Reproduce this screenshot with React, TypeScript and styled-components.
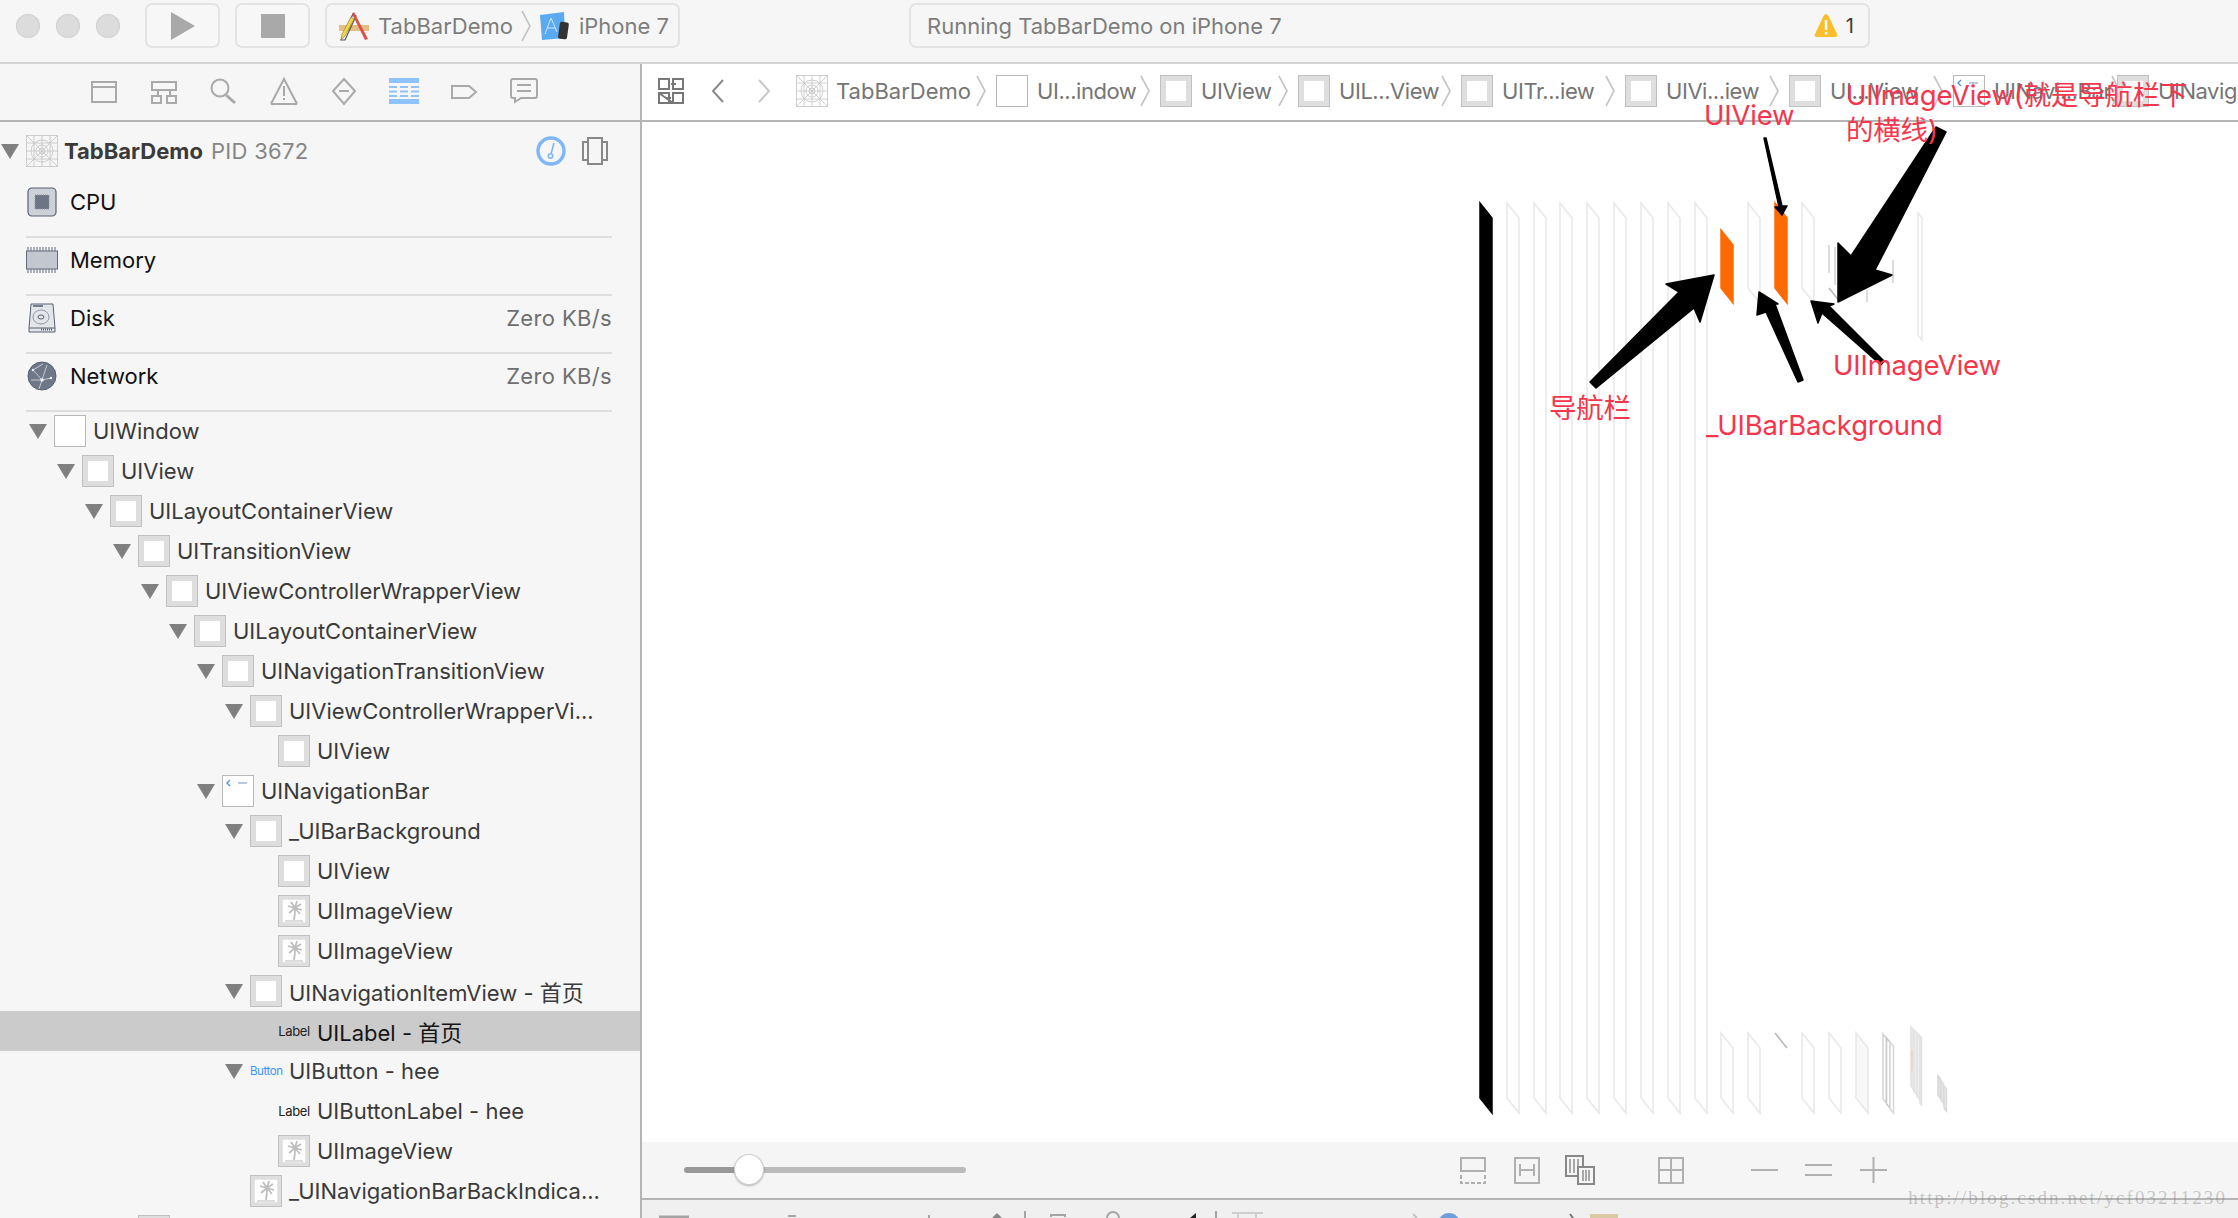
import React from "react";
import styled, { createGlobalStyle } from "styled-components";

const UI_FONT = `"Inter", "Noto Sans CJK SC", sans-serif`;

const GlobalStyle = createGlobalStyle`
  html, body {
    margin: 0;
    padding: 0;
    background: #fff;
    font-family: ${UI_FONT};
  }
`;

const Window = styled.div`
  position: relative;
  display: flex;
  flex-direction: column;
  width: 2238px;
  height: 1218px;
  overflow: hidden;
`;

const Toolbar = styled.div`
  display: flex;
  align-items: flex-start;
  flex: none;
  height: 62px;
  padding-top: 3px;
  box-sizing: border-box;
  background: #f6f6f6;
`;

const ToolbarRule = styled.div`
  flex: none;
  height: 2px;
  background: #d4d4d4;
`;

const Lights = styled.div`
  display: flex;
  gap: 16px;
  padding: 11px 0 0 16px;
  width: 145px;
  box-sizing: border-box;
`;

const Light = styled.span`
  width: 24px;
  height: 24px;
  border-radius: 50%;
  background: #dcdcdc;
  box-shadow: inset 0 0 0 1px #d2d2d2;
`;

const ToolButton = styled.div`
  display: flex;
  align-items: center;
  justify-content: center;
  width: 75px;
  height: 45px;
  margin-right: 15px;
  box-sizing: border-box;
  border: 2px solid #e3e3e3;
  border-radius: 7px;
  background: #f7f7f7;
`;

const SchemeBox = styled.div`
  display: flex;
  align-items: center;
  width: 355px;
  height: 45px;
  padding-left: 11px;
  box-sizing: border-box;
  border: 2px solid #e3e3e3;
  border-radius: 7px;
  font-size: 22px;
  color: #7d7d7d;
`;

const SchemeLabel = styled.span`
  margin-left: 8px;
`;

const StatusBox = styled.div`
  display: flex;
  align-items: center;
  justify-content: space-between;
  width: 961px;
  height: 45px;
  margin-left: 229px;
  padding: 0 14px 0 16px;
  box-sizing: border-box;
  border: 2px solid #e3e3e3;
  border-radius: 7px;
  font-size: 22px;
  color: #7d7d7d;
`;

const WarningCount = styled.div`
  display: flex;
  align-items: center;
  gap: 8px;
  color: #3c3c3c;
  font-size: 20px;
`;

const Body = styled.div`
  display: flex;
  flex: 1;
  min-height: 0;
`;

const Sidebar = styled.div`
  flex: none;
  width: 642px;
  box-sizing: border-box;
  background: #f6f6f6;
  border-right: 2px solid #b5b5b5;
  overflow: hidden;
`;

const NavTabs = styled.div`
  display: flex;
  align-items: center;
  gap: 26px;
  height: 58px;
  padding: 0 0 2px 87px;
  box-sizing: border-box;
  border-bottom: 2px solid #b5b5b5;
`;

const ProcessRow = styled.div`
  display: flex;
  align-items: center;
  height: 58px;
  padding: 0 32px 0 1px;
  font-size: 22px;
`;

const ProcessTriangle = styled.span`
  width: 0;
  height: 0;
  margin-right: 7px;
  border-left: 9px solid transparent;
  border-right: 9px solid transparent;
  border-top: 15px solid #808080;
`;

const ProcessName = styled.span`
  margin-left: 6px;
  font-weight: 700;
  color: #3a3a3a;
`;

const ProcessPid = styled.span`
  margin-left: 8px;
  letter-spacing: 0.3px;
  color: #868686;
  flex: 1;
`;

const ProcessTools = styled.div`
  display: flex;
  align-items: center;
  gap: 16px;
`;

const MetricList = styled.div`
  padding: 0 28px 0 26px;
`;

const MetricRow = styled.div`
  display: flex;
  align-items: center;
  height: 56px;
  margin-bottom: 2px;
  padding-bottom: 13px;
  box-sizing: border-box;
  box-shadow: 0 2px 0 #dedede;
  font-size: 22px;
  color: #111;
`;

const MetricIcon = styled.span`
  display: flex;
  justify-content: center;
  width: 32px;
  margin-right: 12px;
`;

const MetricName = styled.span`
  flex: 1;
`;

const MetricValue = styled.span`
  color: #6f6f6f;
  letter-spacing: 0.35px;
`;

const Tree = styled.div`
  margin-top: -1px;
`;

const TreeRow = styled.div<{ $depth: number; $selected?: boolean }>`
  display: flex;
  align-items: center;
  gap: 7px;
  height: 40px;
  padding-left: ${({ $depth }) => 29 + $depth * 28}px;
  background: ${({ $selected }) => ($selected ? "#cbcbcb" : "transparent")};
  color: ${({ $selected }) => ($selected ? "#151515" : "#3a3a3a")};
  font-size: 22px;
  white-space: nowrap;
`;

const Disclosure = styled.span<{ $open: boolean }>`
  flex: none;
  width: 0;
  height: 0;
  border-left: 9px solid transparent;
  border-right: 9px solid transparent;
  border-top: 15px solid ${({ $open }) => ($open ? "#808080" : "transparent")};
`;

const ViewThumb = styled.span<{ $plain?: boolean }>`
  display: flex;
  flex: none;
  align-items: center;
  justify-content: center;
  width: 32px;
  height: 32px;
  box-sizing: border-box;
  border: 1px solid ${({ $plain }) => ($plain ? "#b9b9b9" : "#c0c0c0")};
  background: ${({ $plain }) => ($plain ? "#fff" : "#dedede")};
`;

const ViewInner = styled.span`
  width: 20px;
  height: 20px;
  background: #fff;
`;

const TagThumb = styled.span<{ $blue?: boolean }>`
  flex: none;
  width: 32px;
  text-align: center;
  font-size: ${({ $blue }) => ($blue ? "11.5px" : "13px")};
  letter-spacing: -0.4px;
  color: ${({ $blue }) => ($blue ? "#3b93ff" : "#222")};
`;

const Pane = styled.div`
  position: relative;
  display: flex;
  flex: 1;
  flex-direction: column;
  min-width: 0;
`;

const JumpBar = styled.div`
  display: flex;
  align-items: center;
  flex: none;
  height: 58px;
  padding: 0 0 2px 16px;
  box-sizing: border-box;
  border-bottom: 2px solid #b5b5b5;
  background: #fff;
  overflow: hidden;
  white-space: nowrap;
  font-size: 22px;
  color: #757575;
`;

const JumpGlyph = styled.svg`
  flex: none;
`;

const JumpArrows = styled.div`
  display: flex;
  flex: none;
  align-items: center;
  gap: 32px;
  margin: 0 25px 0 27px;
`;

const Crumb = styled.div<{ $width: number }>`
  display: flex;
  flex: none;
  align-items: center;
  width: ${({ $width }) => $width}px;
  padding-right: 10px;
  box-sizing: border-box;
  > svg {
    flex: none;
  }
`;

const CrumbLabel = styled.span<{ $tight: boolean }>`
  margin-left: ${({ $tight }) => ($tight ? "9px" : "8px")};
  letter-spacing: ${({ $tight }) => ($tight ? "-0.45px" : "0")};
`;

const CrumbChevron = styled.svg`
  flex: none;
  margin-left: auto;
`;

const SchemeChevron = styled.svg`
  flex: none;
  margin: 0 8px;
`;

const Canvas = styled.div`
  flex: 1;
  min-height: 0;
  background: #fff;
  svg {
    display: block;
  }
`;

const ZoomBar = styled.div`
  display: flex;
  align-items: center;
  flex: none;
  height: 58px;
  box-sizing: border-box;
  padding-left: 42px;
  background: #f5f5f5;
  border-bottom: 2px solid #b5b5b5;
`;

const Slider = styled.div`
  position: relative;
  width: 282px;
  height: 6px;
  border-radius: 3px;
  background: linear-gradient(to right, #999 0 65px, #bbb 65px);
`;

const SliderKnob = styled.span`
  position: absolute;
  left: 50px;
  top: -13px;
  width: 30px;
  height: 31px;
  box-sizing: border-box;
  border-radius: 50%;
  background: #fff;
  border: 1px solid #cfcfcf;
  box-shadow: 0 1px 2px rgba(0, 0, 0, 0.25);
`;

const ZoomTools = styled.div`
  display: flex;
  align-items: center;
  margin-left: 494px;
  height: 100%;
`;

const ZoomTool = styled.svg<{ $gap: number }>`
  flex: none;
  margin-right: ${({ $gap }) => $gap}px;
`;

const DebugStrip = styled.div`
  flex: none;
  height: 18px;
  background: #f0f0f0;
  overflow: hidden;
  svg {
    display: block;
  }
`;

const Note = styled.div<{ $x: number; $y: number }>`
  position: absolute;
  left: ${({ $x }) => $x - 642}px;
  top: ${({ $y }) => $y - 64 - 20}px;
  font-size: 27.5px;
  line-height: 40px;
  letter-spacing: -0.2px;
  color: #f5364c;
  white-space: nowrap;
`;

const Watermark = styled.div`
  position: absolute;
  right: 11px;
  bottom: 8px;
  font-family: "Liberation Serif", serif;
  font-size: 19px;
  letter-spacing: 2.1px;
  line-height: 24px;
  color: rgba(130, 130, 130, 0.42);
  white-space: nowrap;
`;

const iconStroke = "#a9a9a9";

const NavIcon = ({ children, active }: { children: React.ReactNode; active?: boolean }) => (
  <svg width="34" height="30" viewBox="0 0 34 30" fill="none" stroke={active ? "#8fc1fb" : iconStroke} strokeWidth="2">
    {children}
  </svg>
);

const NavIcons = () => (
  <>
    <NavIcon>
      <path d="M5 6h24v20H5zM5 11h24" />
    </NavIcon>
    <NavIcon>
      <path d="M5 6h24v8H5zM11 14v6M23 14v6M5 20h9v7H5zM20 20h9v7h-9z" />
    </NavIcon>
    <NavIcon>
      <circle cx="13" cy="12" r="8.500" />
      <path d="M19 19l9 8" strokeWidth="3" />
    </NavIcon>
    <NavIcon>
      <path d="M17 3L29 26a1 1 0 0 1-1 2H6a1 1 0 0 1-1-2zM17 10v10M17 22v2" />
    </NavIcon>
    <NavIcon>
      <path d="M17 3l11 12-11 13L6 15zM12 15h10" />
    </NavIcon>
    <NavIcon active>
      <path d="M2 4.500h30" strokeWidth="5" />
      <path d="M2 11h8M13 11h8M24 11h8M2 15.500h8M13 15.500h8M24 15.500h8M2 20h8M13 20h8M24 20h8" />
      <path d="M2 25.500h30" strokeWidth="5" />
    </NavIcon>
    <NavIcon>
      <path d="M5 10h17l7 6-7 6H5z" />
    </NavIcon>
    <NavIcon>
      <path d="M6 3h22a2 2 0 0 1 2 2v15a2 2 0 0 1-2 2H14l-6 4v-4H6a2 2 0 0 1-2-2V5a2 2 0 0 1 2-2zM10 9h14M10 15h14" />
    </NavIcon>
  </>
);

const AppGlyph = () => (
  <svg width="32" height="32" viewBox="0 0 32 32" fill="none" stroke="#c4c4c4" strokeWidth="0.8">
    <rect x="0.500" y="0.500" width="31" height="31" />
    <path d="M0 0l32 32M32 0L0 32M16 0v32M0 16h32M8 0v32M24 0v32M0 8h32M0 24h32" />
    <circle cx="16" cy="16" r="11" />
    <circle cx="16" cy="16" r="6" />
    <circle cx="16" cy="16" r="3" />
  </svg>
);

const XcodeGlyph = () => (
  <svg width="32" height="32" viewBox="0 0 32 32">
    <rect x="1" y="15" width="30" height="6" fill="#e6bd80" />
    <path d="M3 30L15 4l3 2L7 30z" fill="none" stroke="#555" strokeWidth="1.2" />
    <path d="M3 30l1-6 9-17 3 2-9 17z" fill="#f1d64d" stroke="#8a7a2a" strokeWidth="0.6" />
    <path d="M16 2l14 27-3 1L14 4z" fill="#d9534a" />
  </svg>
);

const DeviceGlyph = () => (
  <svg width="32" height="32" viewBox="0 0 32 32">
    <path d="M1 5l24-3 1 26-23 2z" fill="#5aaaf0" />
    <path d="M12 8l-6 16M12 8l6 14M8 18h8" stroke="#cfe6fb" strokeWidth="1" fill="none" />
    <rect x="20" y="12" width="9" height="17" rx="2" transform="rotate(8 24 20)" fill="#333" />
  </svg>
);

const GaugeGlyph = () => (
  <svg width="30" height="30" viewBox="0 0 30 30" fill="none" stroke="#7fb6f5">
    <circle cx="15" cy="15" r="13" strokeWidth="3.400" />
    <path d="M18 7l-3 11" strokeWidth="1.600" />
    <circle cx="14.500" cy="20" r="2.200" strokeWidth="1.600" />
  </svg>
);

const SplitGlyph = () => (
  <svg width="26" height="28" viewBox="0 0 26 28" fill="none" stroke="#888" strokeWidth="2">
    <rect x="6" y="1" width="14" height="26" />
    <path d="M6 5H1v18h5M20 5h5v18h-5" />
  </svg>
);

const CpuGlyph = () => (
  <svg width="30" height="30" viewBox="0 0 30 30">
    <rect x="1" y="1" width="28" height="28" rx="4" fill="#cdd1d8" stroke="#596273" strokeWidth="1.200" />
    <rect x="8" y="8" width="14" height="14" fill="#6d7585" stroke="#8d94a3" strokeDasharray="1 1" />
  </svg>
);

const MemoryGlyph = () => (
  <svg width="32" height="26" viewBox="0 0 32 26">
    <path d="M2 0v4M5 0v4M8 0v4M11 0v4M14 0v4M17 0v4M20 0v4M23 0v4M26 0v4M29 0v4M2 22v4M5 22v4M8 22v4M11 22v4M14 22v4M17 22v4M20 22v4M23 22v4M26 22v4M29 22v4" stroke="#636b7a" strokeWidth="1" />
    <rect x="0.500" y="4" width="31" height="18" fill="#c3c7cf" stroke="#636b7a" />
  </svg>
);

const DiskGlyph = () => (
  <svg width="30" height="30" viewBox="0 0 30 30" fill="none">
    <path d="M4 1h22l2 24v4H2v-4z" fill="#e3e5e8" stroke="#596273" />
    <path d="M2 25h26" stroke="#596273" />
    <path d="M6 3h10" stroke="#596273" strokeWidth="1.600" />
    <ellipse cx="14" cy="14" rx="8" ry="7" stroke="#9298a3" />
    <ellipse cx="14" cy="14" rx="3" ry="2" stroke="#596273" />
    <path d="M14 26.500h12" stroke="#596273" strokeWidth="2" strokeDasharray="1 1" />
  </svg>
);

const NetworkGlyph = () => (
  <svg width="30" height="30" viewBox="0 0 30 30" fill="none">
    <circle cx="15" cy="15" r="14" fill="#6f7888" stroke="#596273" />
    <path d="M6 9l9 10 9-2M15 19l-3 9M15 19l5-15M6 9l10-6M4 19l11 0" stroke="#d9dde3" strokeWidth="0.800" />
    <circle cx="15" cy="19" r="1.800" fill="#eef0f3" />
    <circle cx="6" cy="9" r="1.200" fill="#eef0f3" />
    <circle cx="24" cy="17" r="1.200" fill="#eef0f3" />
  </svg>
);

const PalmThumb = () => (
  <ViewThumb>
    <svg width="24" height="24" viewBox="0 0 24 24">
      <rect width="24" height="24" fill="#fff" stroke="#cfcfcf" />
      <path d="M12 21c1-5 1-8 1-12M13 9L6 7M13 9l6-4M13 9l-4-6M13 9l2-7M13 9l7 2M13 9l-6 5M13 9l5 6" stroke="#bdbdbd" strokeWidth="1.800" fill="none" />
      <path d="M3 22h18" stroke="#dcdcdc" strokeWidth="2" />
    </svg>
  </ViewThumb>
);

const NavBarThumb = () => (
  <ViewThumb $plain>
    <svg width="28" height="28" viewBox="0 0 28 28">
      <path d="M6 3L3 6l3 3" stroke="#4a90e2" strokeWidth="1.300" fill="none" />
      <path d="M14 6h9" stroke="#b8c8de" strokeWidth="2" />
    </svg>
  </ViewThumb>
);

type Thumb = "view" | "window" | "image" | "bar" | "label" | "button";

type TreeNode = { depth: number; name?: string; thumb: Thumb; open?: boolean; selected?: boolean };

const NODES: TreeNode[] = [
  { depth: 0, name: "UIWindow", thumb: "window", open: true },
  { depth: 1, name: "UIView", thumb: "view", open: true },
  { depth: 2, name: "UILayoutContainerView", thumb: "view", open: true },
  { depth: 3, name: "UITransitionView", thumb: "view", open: true },
  { depth: 4, name: "UIViewControllerWrapperView", thumb: "view", open: true },
  { depth: 5, name: "UILayoutContainerView", thumb: "view", open: true },
  { depth: 6, name: "UINavigationTransitionView", thumb: "view", open: true },
  { depth: 7, name: "UIViewControllerWrapperVi...", thumb: "view", open: true },
  { depth: 8, name: "UIView", thumb: "view" },
  { depth: 6, name: "UINavigationBar", thumb: "bar", open: true },
  { depth: 7, name: "_UIBarBackground", thumb: "view", open: true },
  { depth: 8, name: "UIView", thumb: "view" },
  { depth: 8, name: "UIImageView", thumb: "image" },
  { depth: 8, name: "UIImageView", thumb: "image" },
  { depth: 7, name: "UINavigationItemView - 首页", thumb: "view", open: true },
  { depth: 8, name: "UILabel - 首页", thumb: "label", selected: true },
  { depth: 7, name: "UIButton - hee", thumb: "button", open: true },
  { depth: 8, name: "UIButtonLabel - hee", thumb: "label" },
  { depth: 8, name: "UIImageView", thumb: "image" },
  { depth: 7, name: "_UINavigationBarBackIndica...", thumb: "image" },
  { depth: 3, thumb: "view" },
];

const renderThumb = (thumb: Thumb) => {
  switch (thumb) {
    case "window":
      return <ViewThumb $plain />;
    case "image":
      return <PalmThumb />;
    case "bar":
      return <NavBarThumb />;
    case "label":
      return <TagThumb>Label</TagThumb>;
    case "button":
      return <TagThumb $blue>Button</TagThumb>;
    default:
      return (
        <ViewThumb>
          <ViewInner />
        </ViewThumb>
      );
  }
};

const chevronPath = <path d="M1 1l8 15-8 15" />;

const CRUMBS: { name: string; thumb: Thumb | "app"; width: number; last?: boolean }[] = [
  { name: "TabBarDemo", thumb: "app", width: 200 },
  { name: "UI...indow", thumb: "window", width: 164 },
  { name: "UIView", thumb: "view", width: 138 },
  { name: "UIL...View", thumb: "view", width: 163 },
  { name: "UITr...iew", thumb: "view", width: 164 },
  { name: "UIVi...iew", thumb: "view", width: 164 },
  { name: "UI...View", thumb: "view", width: 164 },
  { name: "UINavi...Bar", thumb: "bar", width: 164 },
  { name: "UINavigationBar", thumb: "view", width: 300, last: true },
];

type Frame = { x: number; top: number; bottom: number; w?: number; fill?: string; stroke?: string };

const TALL_X = [1507, 1534, 1560, 1587, 1614, 1641, 1668, 1695];

const FRAMES: Frame[] = [
  { x: 1480, top: 203, bottom: 1113, fill: "#000", stroke: "#000" },
  ...TALL_X.map((x) => ({ x, top: 203, bottom: 1113 })),
  { x: 1721, top: 230, bottom: 303, fill: "#ff6a00", stroke: "#ff6a00" },
  { x: 1748, top: 203, bottom: 303 },
  { x: 1775, top: 203, bottom: 303, fill: "#ff6a00", stroke: "#ff6a00" },
  { x: 1802, top: 203, bottom: 303 },
  { x: 1918, top: 213, bottom: 340, w: 4 },
  { x: 1721, top: 1033, bottom: 1113 },
  { x: 1748, top: 1033, bottom: 1113 },
  { x: 1802, top: 1033, bottom: 1113 },
  { x: 1829, top: 1033, bottom: 1113 },
  { x: 1856, top: 1033, bottom: 1113, fill: "#f8f8f8" },
  { x: 1883, top: 1034, bottom: 1103, w: 3.5, fill: "#fff", stroke: "#d4d4d4" },
  { x: 1886.5, top: 1038, bottom: 1108, w: 3.5, fill: "#fff", stroke: "#c8c8c8" },
  { x: 1890, top: 1042, bottom: 1113, w: 3.5, fill: "#fff", stroke: "#d8d8d8" },
  { x: 1911, top: 1027, bottom: 1090, w: 3, fill: "#e8e8e8", stroke: "#e2e2e2" },
  { x: 1914, top: 1030, bottom: 1095, w: 3, fill: "#eeeeee", stroke: "#e2e2e2" },
  { x: 1917, top: 1033, bottom: 1100, w: 3, fill: "#eeeeee", stroke: "#e2e2e2" },
  { x: 1920, top: 1036, bottom: 1105, w: 1.5, fill: "#e8e8e8", stroke: "#e2e2e2" },
  { x: 1938, top: 1076, bottom: 1098, w: 2.5, fill: "#e8e8e8", stroke: "#d4d4d4" },
  { x: 1941, top: 1081, bottom: 1103, w: 2.5, fill: "#e8e8e8", stroke: "#dadada" },
  { x: 1944, top: 1086, bottom: 1111, w: 2.5, fill: "#e8e8e8", stroke: "#dadada" },
];

const framePath = ({ x, top, bottom, w = 12 }: Frame) =>
  `M${x} ${top}L${x + w} ${top + w * 1.25}V${bottom}L${x} ${bottom - w * 1.25}Z`;

const ARROWS = [
  "1590,382 1679,292 1666,284 1714,275 1700,322 1694,308 1596,388",
  "1803,380 1775,304 1778,304 1759,292 1757,315 1766,312 1798,382",
  "1884,361 1829,306 1834,304 1811,301 1818,323 1822,313 1881,365",
  "1936,127 1851,256 1838,243 1838,302 1892,275 1875,270 1946,132",
  "1764,138 1779,207 1775,207 1782,215 1787,206 1782,206 1766,138",
];

const Diagram = () => (
  <svg width="1596" height="1020" viewBox="642 122 1596 1020" fill="none">
    {FRAMES.map((f, i) => (
      <path key={i} d={framePath(f)} fill={f.fill ?? "none"} stroke={f.stroke ?? "#e8e8e8"} strokeWidth="1.5" />
    ))}
    <path d="M1775 1033l12 15M1829 288l11 14" stroke="#b5b5b5" strokeWidth="1.5" />
    <path d="M1912 1050v21" stroke="#eec9ae" strokeWidth="1" />
    <path d="M1829 245v28M1835 247v38M1867 290v12M1893 260v23" stroke="#dcdcdc" strokeWidth="2" />
    {ARROWS.map((points, i) => (
      <polygon key={i} points={points} fill="#000" stroke="#000" strokeWidth="1.5" strokeLinejoin="round" />
    ))}
  </svg>
);

const App = () => (
  <Window>
    <GlobalStyle />
    <Toolbar>
      <Lights>
        <Light />
        <Light />
        <Light />
      </Lights>
      <ToolButton>
        <svg width="24" height="28" viewBox="0 0 24 28">
          <path d="M0 0l24 14L0 28z" fill="#a9a9a9" />
        </svg>
      </ToolButton>
      <ToolButton>
        <svg width="24" height="24" viewBox="0 0 24 24">
          <rect width="24" height="24" fill="#a9a9a9" />
        </svg>
      </ToolButton>
      <SchemeBox>
        <XcodeGlyph />
        <SchemeLabel>TabBarDemo</SchemeLabel>
        <SchemeChevron width="10" height="32" viewBox="0 0 10 32" fill="none" stroke="#c4c4c4" strokeWidth="1.600">
          {chevronPath}
        </SchemeChevron>
        <DeviceGlyph />
        <SchemeLabel>iPhone 7</SchemeLabel>
      </SchemeBox>
      <StatusBox>
        <span>Running TabBarDemo on iPhone 7</span>
        <WarningCount>
          <svg width="24" height="25" viewBox="0 0 24 25">
            <path d="M12 1c1 0 2 1 3 3l8 17c1 2 0 3-2 3H3c-2 0-3-1-2-3L9 4c1-2 2-3 3-3z" fill="#fbbf2d" />
            <path d="M12 7v10M12 19v2.500" stroke="#fff" strokeWidth="2.400" />
          </svg>
          1
        </WarningCount>
      </StatusBox>
    </Toolbar>
    <ToolbarRule />
    <Body>
      <Sidebar>
        <NavTabs>
          <NavIcons />
        </NavTabs>
        <ProcessRow>
          <ProcessTriangle />
          <AppGlyph />
          <ProcessName>TabBarDemo</ProcessName>
          <ProcessPid>PID 3672</ProcessPid>
          <ProcessTools>
            <GaugeGlyph />
            <SplitGlyph />
          </ProcessTools>
        </ProcessRow>
        <MetricList>
          <MetricRow>
            <MetricIcon><CpuGlyph /></MetricIcon>
            <MetricName>CPU</MetricName>
          </MetricRow>
          <MetricRow>
            <MetricIcon><MemoryGlyph /></MetricIcon>
            <MetricName>Memory</MetricName>
          </MetricRow>
          <MetricRow>
            <MetricIcon><DiskGlyph /></MetricIcon>
            <MetricName>Disk</MetricName>
            <MetricValue>Zero KB/s</MetricValue>
          </MetricRow>
          <MetricRow>
            <MetricIcon><NetworkGlyph /></MetricIcon>
            <MetricName>Network</MetricName>
            <MetricValue>Zero KB/s</MetricValue>
          </MetricRow>
        </MetricList>
        <Tree>
          {NODES.map((node, i) => (
            <TreeRow key={i} $depth={node.depth} $selected={node.selected}>
              <Disclosure $open={!!node.open} />
              {renderThumb(node.thumb)}
              {node.name && <span>{node.name}</span>}
            </TreeRow>
          ))}
        </Tree>
      </Sidebar>
      <Pane>
        <JumpBar>
          <JumpGlyph width="26" height="26" viewBox="0 0 26 26" fill="none" stroke="#777" strokeWidth="2">
            <path d="M1 1h10v10H1zM15 1h10v10H15zM1 15h10v10H15zM1 15h10v10H1zM15 15h10v10H15zM13 6h5M8 20h5" />
          </JumpGlyph>
          <JumpArrows>
            <svg width="14" height="24" viewBox="0 0 14 24" fill="none" stroke="#8a8a8a" strokeWidth="2">
              <path d="M12 1L2 12l10 11" />
            </svg>
            <svg width="14" height="24" viewBox="0 0 14 24" fill="none" stroke="#c8c8c8" strokeWidth="2">
              <path d="M2 1l10 11L2 23" />
            </svg>
          </JumpArrows>
          {CRUMBS.map((crumb, i) => (
            <Crumb key={i} $width={crumb.width}>
              {crumb.thumb === "app" ? <AppGlyph /> : renderThumb(crumb.thumb)}
              <CrumbLabel $tight={i > 0}>{crumb.name}</CrumbLabel>
              {!crumb.last && (
                <CrumbChevron width="10" height="32" viewBox="0 0 10 32" fill="none" stroke="#c4c4c4" strokeWidth="1.600">
                  {chevronPath}
                </CrumbChevron>
              )}
            </Crumb>
          ))}
        </JumpBar>
        <Canvas>
          <Diagram />
        </Canvas>
        <ZoomBar>
          <Slider>
            <SliderKnob />
          </Slider>
          <ZoomTools>
            <ZoomTool $gap={28} width="26" height="28" viewBox="0 0 26 28" fill="none" stroke="#b0b0b0" strokeWidth="2">
              <path d="M1 2h24v13H1z" />
              <path d="M1 19v8h24v-8" strokeDasharray="4 2" />
            </ZoomTool>
            <ZoomTool $gap={25} width="26" height="28" viewBox="0 0 26 28" fill="none" stroke="#b0b0b0" strokeWidth="2">
              <path d="M1 2h24v25H1zM6 8v12M20 8v12M6 14h14" />
            </ZoomTool>
            <ZoomTool $gap={63} width="30" height="30" viewBox="0 0 30 30" fill="none" stroke="#888" strokeWidth="2">
              <path d="M1 1h17v20H1z" />
              <path d="M5 4v14M9 4v14M13 4v14" strokeWidth="1.400" />
              <path d="M13 12h16v17H13z" fill="#f5f5f5" />
              <path d="M18 15v11M21 15v11M24 15v11" strokeWidth="1.400" />
            </ZoomTool>
            <ZoomTool $gap={67} width="26" height="28" viewBox="0 0 26 28" fill="none" stroke="#b0b0b0" strokeWidth="2">
              <path d="M1 2h24v25H1zM13 2v25M1 14h24" />
            </ZoomTool>
            <ZoomTool $gap={27} width="27" height="28" viewBox="0 0 27 28" fill="none" stroke="#b0b0b0" strokeWidth="2">
              <path d="M0 14h27" />
            </ZoomTool>
            <ZoomTool $gap={28} width="27" height="28" viewBox="0 0 27 28" fill="none" stroke="#b0b0b0" strokeWidth="2">
              <path d="M0 9h27M0 19h27" />
            </ZoomTool>
            <ZoomTool $gap={0} width="27" height="28" viewBox="0 0 27 28" fill="none" stroke="#b0b0b0" strokeWidth="2">
              <path d="M0 14h27M13.500 1v26" />
            </ZoomTool>
          </ZoomTools>
        </ZoomBar>
        <DebugStrip>
          <svg width="1596" height="18" viewBox="642 1200 1596 18" fill="none" stroke="#a4a4a4" strokeWidth="2">
            <path d="M659 1217h30" strokeWidth="3" />
            <path d="M788 1216h8M929 1215v3M1025 1211v7M1216 1211v7" />
            <path d="M992 1218l5-5 5 5" fill="#888" stroke="none" />
            <path d="M1051 1217v-2h14v2M1107 1218a6 6 0 0 1 12 0" />
            <path d="M1190 1218l6-5v5z" fill="#222" stroke="none" />
            <path d="M1232 1213h31M1238 1213v5M1256 1213v5" stroke="#cfcfcf" />
            <path d="M1413 1214l4 4" stroke="#c4c4c4" />
            <circle cx="1449" cy="1224" r="11" fill="#6f9fd8" stroke="none" />
            <path d="M1570 1214l3 4" stroke="#777" />
            <rect x="1590" y="1214" width="28" height="6" fill="#d9c9a4" stroke="none" />
          </svg>
        </DebugStrip>
        <Note $x={1704} $y={115}>UIView</Note>
        <Note $x={1846} $y={95}>UIImageView(就是导航栏下</Note>
        <Note $x={1846} $y={130}>的横线)</Note>
        <Note $x={1833} $y={365}>UIImageView</Note>
        <Note $x={1549} $y={408}>导航栏</Note>
        <Note $x={1706} $y={425}>_UIBarBackground</Note>
      </Pane>
      <Watermark>http://blog.csdn.net/ycf03211230</Watermark>
    </Body>
  </Window>
);

export default App;
